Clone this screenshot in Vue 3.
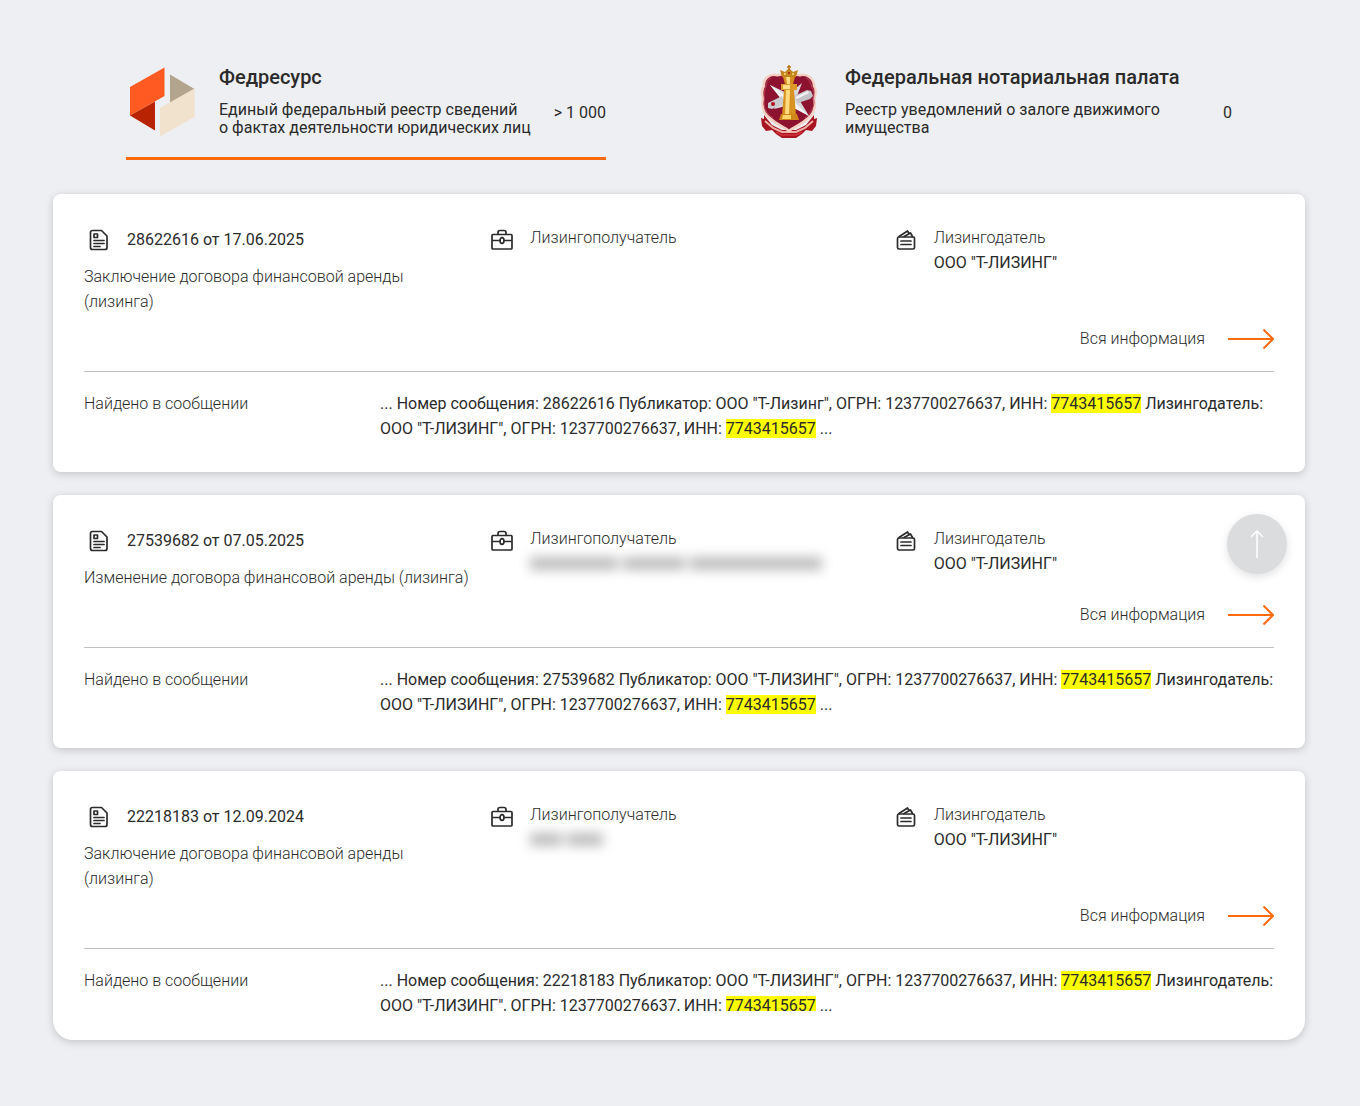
<template>
  <div class="page">
    <nav class="sources">
      <button
        v-for="source in sources"
        :key="source.id"
        type="button"
        class="source"
        :class="{ active: activeSource === source.id }"
        @click="activeSource = source.id"
      >
        <span class="source-logo">
          <svg v-if="source.id === 'fedresurs'" width="72" height="72" viewBox="0 0 72 72" aria-hidden="true">
            <path d="M4 22 38.500 2.500V31L4 50.500Z" fill="#ff5a22" />
            <path d="M4 50.500 29 36.400V65.500Z" fill="#b82402" />
            <path d="M44 9.500 68.500 24 44 38Z" fill="#b3a58d" />
            <path d="M34 43 68.500 23.500V52L34 71.500Z" fill="#f1e2ce" />
          </svg>
          <svg v-else width="72" height="74" viewBox="0 0 72 74" aria-hidden="true">
            <path d="M12 50 20 60 30 65 44 65 54 60 62 50 62 54 65 53 64 61 60 66 54 65 50 69 44 73H30L24 69 20 65 14 66 10 61 9 53 12 54Z" fill="#a81420" />
            <path d="M13 56 21 63 30 67H44L53 63 61 56" fill="none" stroke="#efb0a8" stroke-width="2" />
            <path d="M24 67 30 70H44L50 67" fill="none" stroke="#d2323a" stroke-width="1.500" />
            <path d="M37 7C31 8 29 11 24 10C17 9 11 14 12 21C9 25 10 29 11 34C9 43 13 50 19 54C25 60 31 61 37 66C43 61 49 60 55 54C61 50 64 43 62 34C64 29 65 25 62 21C62 14 56 9 49 10C44 11 42 8 37 7Z" fill="#8d1230" stroke="#f6cfc3" stroke-width="2.500" />
            <path d="M19 13C13 16 15 20 13 24C11 28 13 32 12 38C12 44 15 49 21 53M54 13C60 16 58 20 61 24C63 28 61 32 62 38C61 44 58 49 53 53" fill="none" stroke="#b8455a" />
            <path d="M18 20 37 29 50 18 45 31 57 51 38 40 22 44 29 34Z" fill="#d9d9dc" />
            <path d="M18 20 38 33 57 51 34 39Z" fill="#f4f4f5" />
            <path d="M42 31 55 25 59 26 61 31 58 34 46 38Z" fill="#c4c3c8" />
            <path d="M43 32 56 26 57 28 45 34Z" fill="#f1f1f3" />
            <path d="M16 38 30 31 33 38 20 44 16 43Z" fill="#cbcacf" />
            <circle cx="21" cy="39" r="2" fill="#b5121d" />
            <path d="M32 25H42L44 51H30Z" fill="#d8921f" />
            <path d="M34 25H38L37 51H33Z" fill="#ffdc82" />
            <path d="M31 12H43L41 19H33Z" fill="#d68d1e" />
            <path d="M34 12H38V19H35Z" fill="#ffdc82" />
            <path d="M29 19H45V25H29Z" fill="#dd9a28" />
            <path d="M31 20H38V24H31Z" fill="#ffe08a" />
            <path d="M29 49H45L47 55H27Z" fill="#cf8519" />
            <path d="M31 50H39V54H30Z" fill="#ffd66b" />
            <path d="M28 5 33 7 37 3 41 7 46 5 44 12H30Z" fill="#c4851f" />
            <path d="M37 0V5M35 2H39" stroke="#b8791b" stroke-width="1.500" />
            <circle cx="33" cy="9" r="1" fill="#ffe08a" />
            <circle cx="37" cy="8" r="1" fill="#b5121d" />
            <circle cx="41" cy="9" r="1" fill="#ffe08a" />
          </svg>
        </span>
        <span class="source-text">
          <span class="source-title">{{ source.title }}</span>
          <span class="source-desc">{{ source.desc }}</span>
        </span>
        <span class="source-count">{{ source.count }}</span>
      </button>
    </nav>

    <main class="cards">
      <article v-for="item in items" :key="item.number" class="card">
        <div class="card-top">
          <div>
            <div class="doc">
              <span class="icon">
                <svg width="20" height="22" viewBox="0 0 20 22" aria-hidden="true">
                  <path d="M3.500 1.500H12.500L18 7V18.500Q18 20.500 16 20.500H3.500Q1.500 20.500 1.500 18.500V3.500Q1.500 1.500 3.500 1.500Z" />
                  <path d="M5 5H8.500V8.500H5ZM5 11.500H15M5 14.500H15M5 17.500H11" />
                </svg>
              </span>
              <span>{{ item.number }} от {{ item.date }}</span>
            </div>
            <p class="kind">{{ item.kind }}</p>
          </div>
          <div class="party">
            <span class="icon">
              <svg width="22" height="22" viewBox="0 0 22 22" aria-hidden="true">
                <path d="M2 5.500H20Q21 5.500 21 6.500V19Q21 20 20 20H2Q1 20 1 19V6.500Q1 5.500 2 5.500ZM7 5V3.500Q7 1.500 9 1.500H13Q15 1.500 15 3.500V5M1 11.500H9M13 11.500H21" />
                <ellipse cx="11" cy="11.500" rx="2" ry="2.800" />
              </svg>
            </span>
            <div>
              <div class="party-label">Лизингополучатель</div>
              <div v-if="item.hidden.length" class="hidden-name">
                <span v-for="(width, i) in item.hidden" :key="i" :style="{ width: width + 'px' }"></span>
              </div>
            </div>
          </div>
          <div class="party">
            <span class="icon">
              <svg width="20" height="22" viewBox="0 0 20 22" aria-hidden="true">
                <path d="M3 8H17Q18.500 8 18.500 9.500V18.500Q18.500 20 17 20H3Q1.500 20 1.500 18.500V9.500Q1.500 8 3 8ZM5 12H15M5 15.500H15" />
                <path d="M3 7.500 11.500 2 13 4.500M8 7.500 14.500 4 16.500 7.500" />
              </svg>
            </span>
            <div>
              <div class="party-label">Лизингодатель</div>
              <div>ООО "Т-ЛИЗИНГ"</div>
            </div>
          </div>
        </div>
        <div class="more-row">
          <a href="#" class="more" @click.prevent>
            Вся информация
            <svg width="46" height="20" viewBox="0 0 46 20" aria-hidden="true">
              <path d="M0 10H45M35.500 0.500 45 10 35.500 19.500" />
            </svg>
          </a>
        </div>
        <div class="found">
          <div class="found-label">Найдено в сообщении</div>
          <div class="found-text">
            ... Номер сообщения: {{ item.number }} Публикатор: ООО "{{ item.publisher }}", ОГРН: 1237700276637, ИНН: <mark>7743415657</mark> Лизингодатель: ООО "Т-ЛИЗИНГ", ОГРН: 1237700276637, ИНН: <mark>7743415657</mark> ...
          </div>
        </div>
      </article>
    </main>

    <button type="button" class="to-top" aria-label="Наверх" @click="scrollTop">
      <svg width="14" height="28" viewBox="0 0 14 28" aria-hidden="true">
        <path d="M7 28V1M1 7 7 1 13 7" />
      </svg>
    </button>
  </div>
</template>

<script setup>
  import { ref } from 'vue'

  const activeSource = ref('fedresurs')

  const sources = [
    {
      id: 'fedresurs',
      title: 'Федресурс',
      desc: 'Единый федеральный реестр сведений о\u00a0фактах деятельности юридических лиц',
      count: '> 1 000'
    },
    {
      id: 'notary',
      title: 'Федеральная нотариальная палата',
      desc: 'Реестр уведомлений о залоге движимого имущества',
      count: '0'
    }
  ]

  // hidden: widths of the blurred words in the lessee's name
  const items = [
    {
      number: '28622616',
      date: '17.06.2025',
      kind: 'Заключение договора финансовой аренды (лизинга)',
      publisher: 'Т-Лизинг',
      hidden: []
    },
    {
      number: '27539682',
      date: '07.05.2025',
      kind: 'Изменение договора финансовой аренды (лизинга)',
      publisher: 'Т-ЛИЗИНГ',
      hidden: [88, 62, 132]
    },
    {
      number: '22218183',
      date: '12.09.2024',
      kind: 'Заключение договора финансовой аренды (лизинга)',
      publisher: 'Т-ЛИЗИНГ',
      hidden: [32, 36]
    }
  ]

  function scrollTop() {
    window.scrollTo({ top: 0, behavior: 'smooth' })
  }
</script>

<style>
body {
  background: #eeeff2;
}
</style>

<style scoped>
.page {
  position: relative;
  box-sizing: border-box;
  min-height: 100vh;
  padding: 60px 55px 66px 53px;
  background: #eeeff2;
  color: #2b2b2b;
  font-family: Roboto, "Liberation Sans", sans-serif;
  font-size: 16px;
  line-height: 25px;
}
.sources {
  display: flex;
  justify-content: space-between;
  padding: 0 73px;
  margin-bottom: 34px;
}
.source {
  display: flex;
  box-sizing: border-box;
  width: 480px;
  height: 100px;
  padding: 5px 0 0;
  border: none;
  border-bottom: 3px solid transparent;
  background: none;
  color: inherit;
  font: inherit;
  text-align: left;
  cursor: pointer;
}
.source.active {
  border-bottom-color: #ff6a0a;
}
.source-logo {
  flex: none;
  width: 93px;
}
.source-logo svg {
  display: block;
}
.source-text {
  flex: 1;
}
.source-title,
.source-desc {
  display: block;
}
.source-title {
  margin-bottom: 12px;
  font-size: 20px;
  font-weight: 500;
  line-height: 24px;
  white-space: nowrap;
}
.source-desc {
  max-width: 320px;
  line-height: 18px;
}
.source-count {
  align-self: flex-start;
  margin-top: 35px;
}
.cards {
  display: flex;
  flex-direction: column;
  gap: 23px;
}
.card {
  padding: 31px;
  border-radius: 8px;
  background: #fff;
  box-shadow: 0 2px 8px rgba(0, 0, 0, 0.18);
}
.card:last-child {
  padding-bottom: 29px;
  border-radius: 8px 8px 20px 20px;
}
.card-top {
  display: grid;
  grid-template-columns: repeat(3, 1fr);
  gap: 20px;
}
.doc,
.party {
  display: flex;
}
.doc {
  padding-top: 2px;
}
.icon {
  display: flex;
  flex: none;
  justify-content: center;
  width: 30px;
  margin-right: 13px;
}
.icon svg {
  margin-top: 4px;
  fill: none;
  stroke: #2b2b2b;
  stroke-width: 1.7;
  stroke-linecap: round;
  stroke-linejoin: round;
}
.doc .icon svg {
  margin-top: 2px;
}
.kind {
  margin: 12px -8px 0 0;
  font-weight: 300;
}
.party-label,
.more,
.found-label {
  font-weight: 300;
}
.hidden-name {
  display: flex;
  gap: 5px;
  padding-top: 6px;
  filter: blur(6px);
}
.hidden-name span {
  height: 13px;
  background: #bcbcbc;
}
.more-row {
  display: flex;
  justify-content: flex-end;
  padding: 12px 0 20px;
  border-bottom: 1px solid #c0c1c4;
}
.more {
  display: flex;
  align-items: center;
  gap: 23px;
  color: inherit;
  text-decoration: none;
}
.more svg {
  fill: none;
  stroke: #ff6a0a;
  stroke-width: 2;
}
.found {
  display: grid;
  grid-template-columns: 296px 1fr;
  padding-top: 19px;
}
.found-text {
  margin-right: -8px;
}
.card:last-child .found-text {
  height: 43px;
  overflow: hidden;
}
mark {
  background: #ff0;
  color: inherit;
}
.to-top {
  position: absolute;
  top: 514px;
  right: 73px;
  display: flex;
  align-items: center;
  justify-content: center;
  width: 60px;
  height: 60px;
  padding: 0;
  border: none;
  border-radius: 50%;
  background: #dbdcde;
  box-shadow: 0 3px 8px rgba(0, 0, 0, 0.12);
  cursor: pointer;
}
.to-top svg {
  fill: none;
  stroke: #fff;
  stroke-width: 1.5;
}
</style>
